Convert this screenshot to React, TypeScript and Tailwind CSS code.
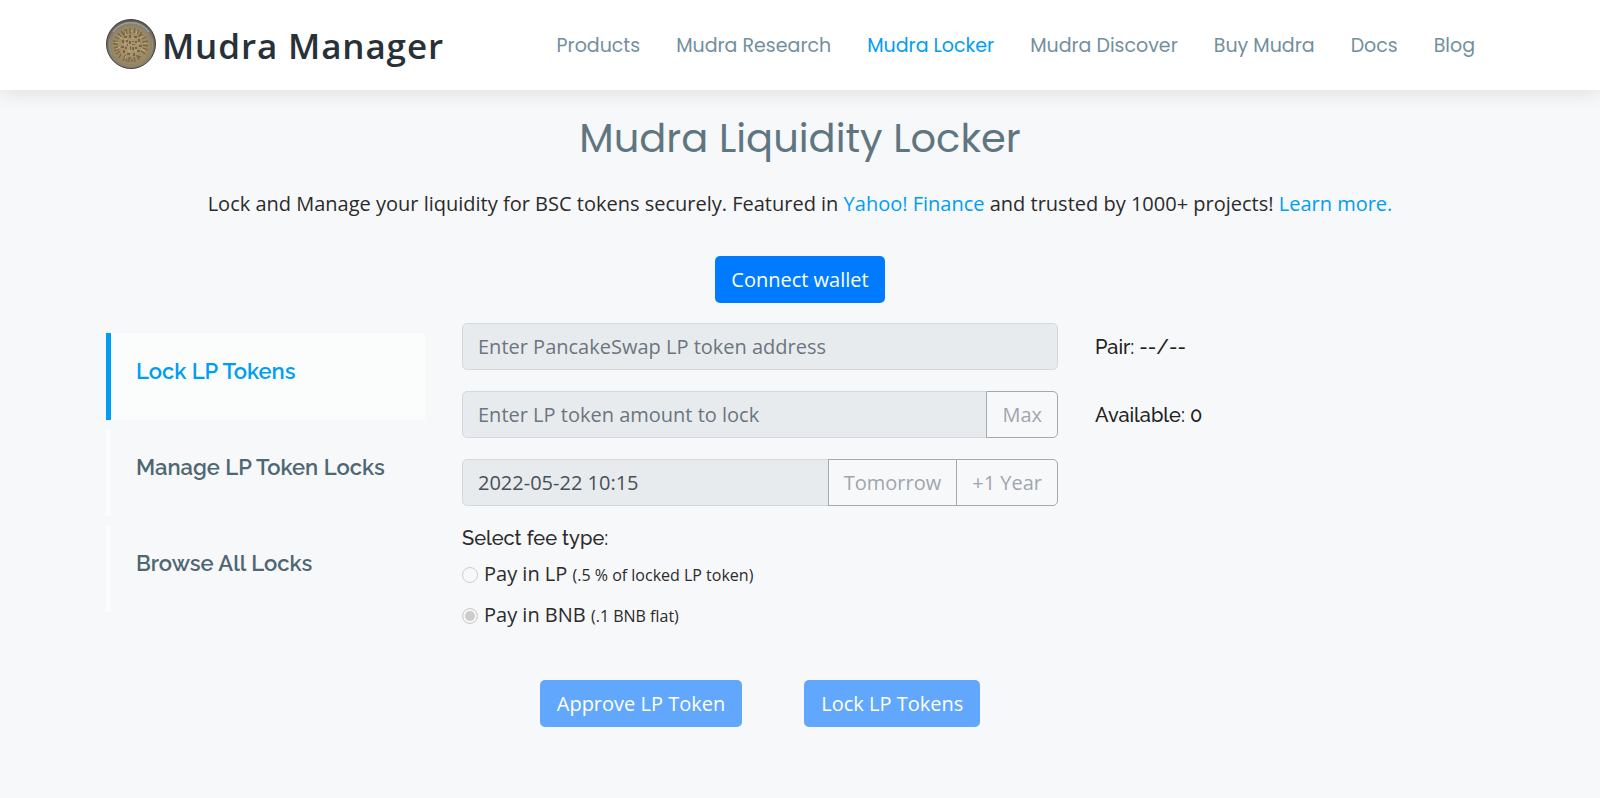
const navLinks = [
  "Products",
  "Mudra Research",
  "Mudra Locker",
  "Mudra Discover",
  "Buy Mudra",
  "Docs",
  "Blog",
];

const tabs = ["Lock LP Tokens", "Manage LP Token Locks", "Browse All Locks"];

const Coin = () => (
  <svg className="size-[50px]" viewBox="0 0 50 50" aria-hidden="true">
    <defs>
      <radialGradient id="coin" cx="50%" cy="54%" r="52%">
        <stop offset="0" stopColor="#b09b70" />
        <stop offset="0.7" stopColor="#9c8861" />
        <stop offset="0.86" stopColor="#86806f" />
        <stop offset="1" stopColor="#5d5a52" />
      </radialGradient>
    </defs>
    <circle cx="25" cy="25" r="24.5" fill="url(#coin)" stroke="#45413a" />
    <path d="M7 13A22 22 0 0 1 43 13" fill="none" stroke="#9a9f96" strokeWidth="1.5" />
    <path d="M4 20A22 22 0 0 0 6 36M46 20A22 22 0 0 1 43 37" fill="none" stroke="#8d9089" strokeWidth="1" />
    <g fill="none" stroke="#75664a" strokeWidth="1.3">
      <path d="M7 22l5 1M7 25h5M8 29l4-1M8 32l5-2M10 35l4-3M9 18l4 2M12 14l3 4M15 12l3 4l1-5M20 10l1 5M24 9v5h3M29 9l-1 5M33 11l-2 4M36 13l-3 4l4-1M40 18l-4 2M42 22l-5 1v3M42 27l-5-1M42 31l-5-2M39 35l-4-3" />
      <path d="M13 39l2-4M17 42l2-5l2 6M23 43v-4h3v4M29 43l-1-5M33 41l-2-4l4 1" />
    </g>
    <g fill="#74644a">
      <path d="M18 17h3v2h-3zM23 16h2v3h-2zM28 17h3v2h-3zM32 20h2v3h-2zM16 21h2v3h-2zM15 27h3v2h-3zM33 26h3v2h-3zM17 31h2v3h-2zM31 31h3v2h-3zM21 34h3v2h-3zM27 34h2v3h-2zM20 21h2v2h-2zM29 22h2v2h-2zM19 28h2v2h-2zM29 28h2v2h-2z" />
      <path d="M23 22h2v3h-2zM26 22h2v1h-2zM26 25h3v1h-3zM24 27h1v4h-1zM26 28h2v3h-2zM21 25h1v2h-1z" />
    </g>
    <g fill="none" stroke="#c2ae82" strokeWidth="1">
      <path d="M9 23l4 1M10 30l4-2M13 17l3 3M19 12l1 4M26 11v4M31 12l-1 3M37 17l-3 2M40 24l-4 1M39 32l-4-2" />
      <path d="M18 20h3M26 19h2M31 24h2M18 25h2M22 32h3M29 32h2M20 37l-1 3M26 38v2" />
    </g>
  </svg>
);

const Header = () => (
  <header className="relative bg-white shadow-[0_3px_19px_rgba(0,0,0,0.1)]">
    <div className="mx-auto flex h-[90px] max-w-[1426px] items-center justify-between px-[19px]">
      <a href="#" className="flex items-start gap-[6px] pb-[2px] text-[#283038]">
        <Coin />
        <span className="pt-[5px] text-[35px] leading-[44px] font-semibold tracking-wide">Mudra Manager</span>
      </a>
      <nav className="flex gap-[36px] pt-[2px] pr-[19px] font-['Poppins','Inter',sans-serif] text-[19px] leading-[24px] text-[#728f9d]">
        {navLinks.map((link) => (
          <a key={link} href="#" className={link === "Mudra Locker" ? "text-[#009df4]" : ""}>
            {link}
          </a>
        ))}
      </nav>
    </div>
  </header>
);

const Sidebar = () => (
  <nav className="flex flex-col gap-[9px] pt-[10px] font-['Raleway','Lato',sans-serif] text-[22px] leading-[28px] font-semibold">
    {tabs.map((tab, i) => (
      <a
        key={tab}
        href="#"
        className={
          i === 0
            ? "h-[87px] border-l-5 border-[#009df4] bg-[#fbfdfc] pt-[24px] pl-[25px] text-[#009df4]"
            : "h-[87px] border-l-5 border-[#fbfdfc] pt-[24px] pl-[25px] text-[#4f6772]"
        }
      >
        {tab}
      </a>
    ))}
  </nav>
);

const inputStyle =
  "h-[47px] min-w-0 flex-1 border border-[#d3d8de] bg-[#e8ebee] px-[15px] text-[#495057] placeholder:text-[#6c757d]";
const addonStyle = "-ml-px h-[47px] border border-[#a3a9af] px-[15px] text-[#a0a6ac]";
const radioStyle =
  "size-4 appearance-none rounded-full border border-[#cfcfcf] bg-[#f8f8f8] checked:bg-[#cccccc] checked:shadow-[inset_0_0_0_2px_#f8f8f8]";

const LockForm = () => (
  <form>
    <div className="flex flex-col gap-[21px]">
      <div className="flex">
        <input
          className={`${inputStyle} rounded-[5px]`}
          placeholder="Enter PancakeSwap LP token address"
          aria-label="LP token address"
          disabled
        />
      </div>
      <div className="flex">
        <input
          className={`${inputStyle} rounded-l-[5px]`}
          placeholder="Enter LP token amount to lock"
          aria-label="LP token amount"
          disabled
        />
        <button type="button" className={`${addonStyle} rounded-r-[5px]`} disabled>
          Max
        </button>
      </div>
      <div className="flex">
        <input
          className={`${inputStyle} rounded-l-[5px]`}
          defaultValue="2022-05-22 10:15"
          aria-label="Unlock date"
          disabled
        />
        <button type="button" className={addonStyle} disabled>
          Tomorrow
        </button>
        <button type="button" className={`${addonStyle} rounded-r-[5px]`} disabled>
          +1 Year
        </button>
      </div>
    </div>
    <fieldset className="pt-[17px]">
      <legend className="float-left w-full font-['Raleway','Lato',sans-serif] leading-[30px] font-medium">
        Select fee type:
      </legend>
      <div className="clear-both flex flex-col gap-[10px] pt-[6px] leading-[30px]">
        <label className="flex items-center gap-[6px]">
          <input type="radio" name="fee" className={radioStyle} disabled />
          <span>
            Pay in LP <small className="text-[16px]">(.5 % of locked LP token)</small>
          </span>
        </label>
        <label className="flex items-center gap-[6px]">
          <input type="radio" name="fee" className={radioStyle} defaultChecked disabled />
          <span>
            Pay in BNB <small className="text-[16px]">(.1 BNB flat)</small>
          </span>
        </label>
      </div>
    </fieldset>
    <div className="flex justify-center gap-[62px] pt-[49px]">
      <button type="button" className="h-[47px] rounded-[5px] bg-[#62a7fe] px-[17px] text-white" disabled>
        Approve LP Token
      </button>
      <button type="button" className="h-[47px] rounded-[5px] bg-[#62a7fe] px-[17px] text-white" disabled>
        Lock LP Tokens
      </button>
    </div>
  </form>
);

const App = () => {
  return (
    <div className="min-h-screen bg-[#f7f8fa] font-['Open_Sans',sans-serif] text-[20px] leading-[30px] text-[#2b2b2b]">
      <Header />
      <main className="mx-auto max-w-[1426px] px-[19px] pb-[70px]">
        <div className="flex flex-col items-center text-center">
          <h1 className="pt-[24px] font-['Poppins','Inter',sans-serif] text-[40px] leading-[48px] text-[#5f7680]">
            Mudra Liquidity Locker
          </h1>
          <p className="pt-[27px]">
            Lock and Manage your liquidity for BSC tokens securely. Featured in{" "}
            <a href="#" className="text-[#009df4]">
              Yahoo! Finance
            </a>{" "}
            and trusted by 1000+ projects!{" "}
            <a href="#" className="text-[#009df4]">
              Learn more.
            </a>
          </p>
          <button type="button" className="mt-[37px] h-[47px] rounded-[5px] bg-[#007bff] px-[16px] text-white">
            Connect wallet
          </button>
        </div>
        <div className="grid grid-cols-[319fr_596fr_399fr] gap-[37px] pt-[20px]">
          <Sidebar />
          <LockForm />
          <div className="flex flex-col gap-[19px] font-['Raleway','Lato',sans-serif] leading-[49px] font-medium text-[#222222]">
            <p>Pair: --/--</p>
            <p>Available: 0</p>
          </div>
        </div>
      </main>
    </div>
  );
};

export default App;
